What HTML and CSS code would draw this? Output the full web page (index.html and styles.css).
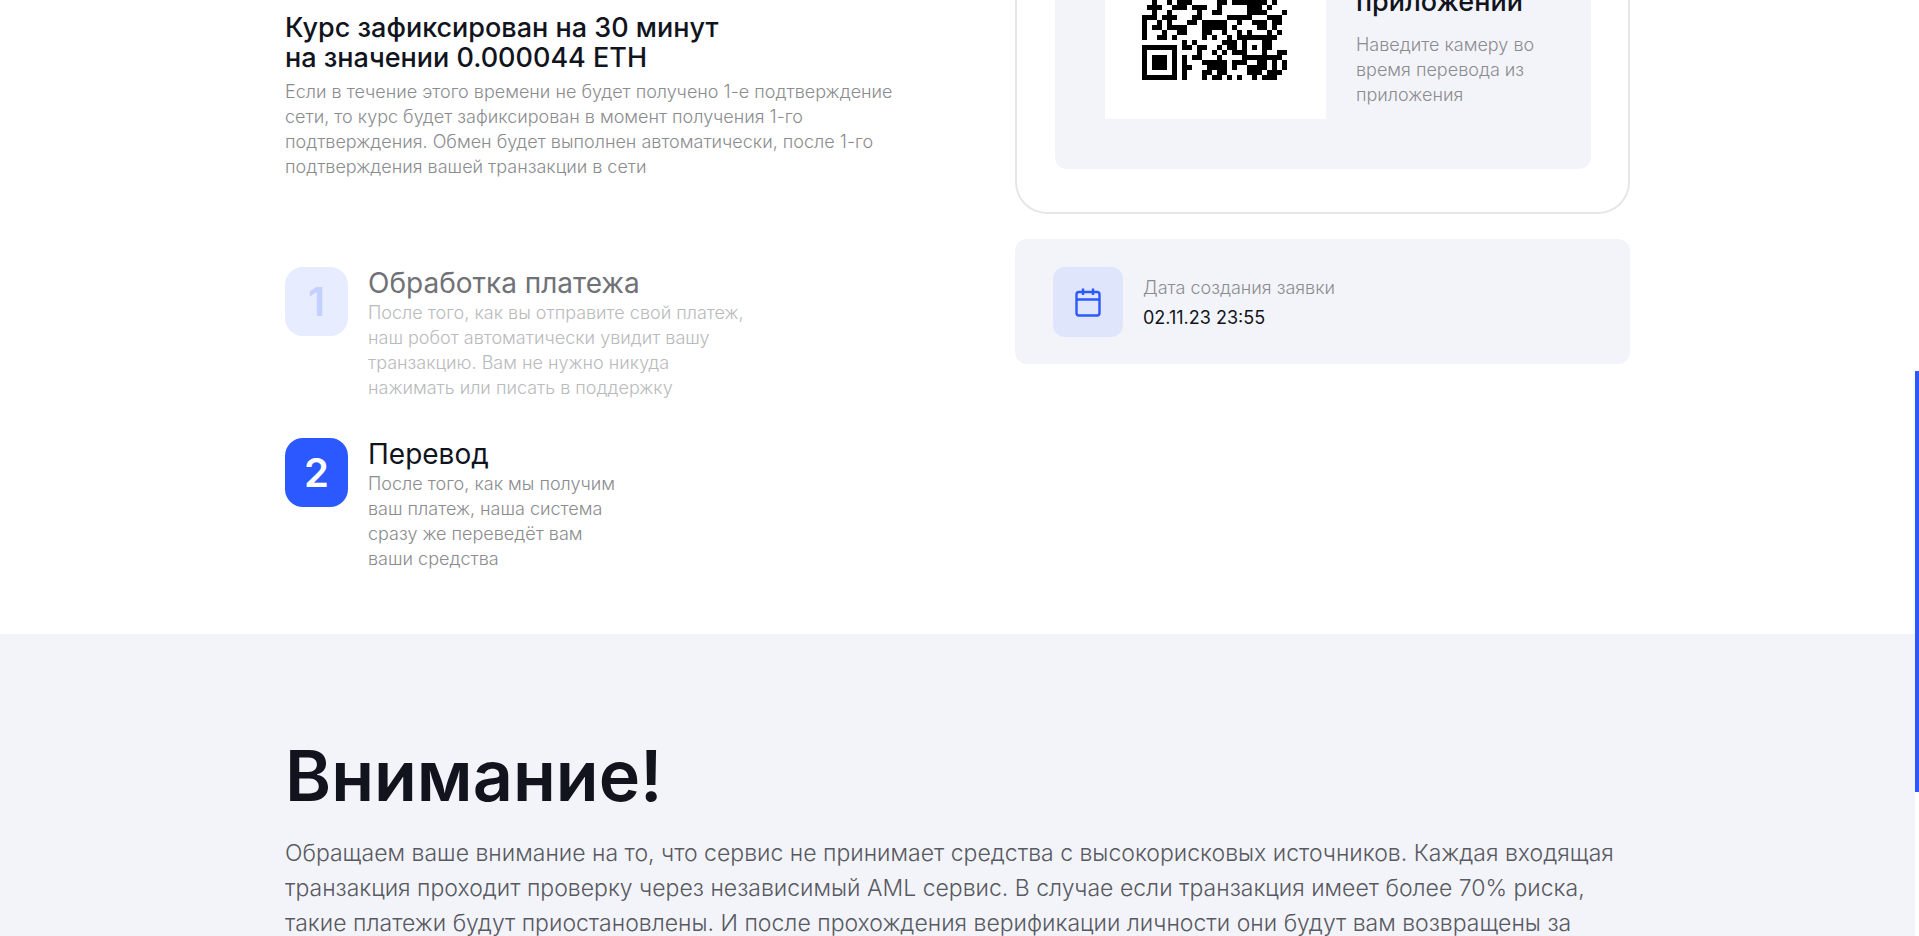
FILE: index.html
```html
<!DOCTYPE html>
<html lang="ru">
<head>
<meta charset="utf-8">
<title>Заявка на обмен</title>
<link rel="stylesheet" href="styles.css">
</head>
<body>
<main class="page">
  <section class="container order">
    <div class="order-info">
      <div class="rate">
        <h2 class="rate-title">Курс зафиксирован на 30 минут<br>на значении 0.000044 ETH</h2>
        <p class="text rate-text">Если в течение этого времени не будет получено 1-е подтверждение<br>сети, то курс будет зафиксирован в момент получения 1-го<br>подтверждения. Обмен будет выполнен автоматически, после 1-го<br>подтверждения вашей транзакции в сети</p>
      </div>
      <ol class="steps">
        <li class="step step-done">
          <span class="step-number">1</span>
          <div>
            <h3 class="step-title">Обработка платежа</h3>
            <p class="text">После того, как вы отправите свой платеж,<br>наш робот автоматически увидит вашу<br>транзакцию. Вам не нужно никуда<br>нажимать или писать в поддержку</p>
          </div>
        </li>
        <li class="step">
          <span class="step-number">2</span>
          <div>
            <h3 class="step-title">Перевод</h3>
            <p class="text">После того, как мы получим<br>ваш платеж, наша система<br>сразу же переведёт вам<br>ваши средства</p>
          </div>
        </li>
      </ol>
    </div>

    <div class="order-side">
      <div class="pay-card">
        <div class="qr-panel">
          <div class="qr-box">
            <svg class="qr" viewBox="0 0 29 16" role="img" aria-label="QR-код" shape-rendering="crispEdges">
              <path stroke="#000" stroke-width="1" fill="none" d="
M2 .5h1m2 0h1m1 0h3m5 0h2m1 0h7m1 0h1
M1 1.5h3m2 0h3m1 0h3m2 0h1m5 0h3m1 0h1
M2 2.5h1m2 0h1m5 0h1m2 0h2m5 0h4m3 0h1
M0 3.5h3m1 0h3m3 0h2m5 0h5m3 0h3
M0 4.5h1m2 0h1m1 0h1m3 0h2m1 0h5m2 0h1m2 0h3m1 0h2
M0 5.5h1m1 0h2m1 0h4m3 0h5m1 0h1m4 0h2m1 0h1
M0 6.5h1m3 0h1m2 0h2m3 0h2m2 0h1m2 0h1m1 0h1m3 0h1m1 0h1
M0 7.5h1m2 0h2m1 0h1m5 0h1m1 0h1m2 0h1m1 0h1m0 0h7
M8 8.5h1m1 0h1m5 0h3m1 0h1m3 0h2
M0 9.5h7m1 0h2m1 0h2m2 0h1m1 0h2m1 0h1m1 0h1m1 0h2
M0 10.5h1m5 0h1m4 0h1m2 0h1m1 0h1m1 0h3m3 0h1m2 0h2
M0 11.5h1m1 0h3m1 0h1m1 0h1m1 0h2m3 0h1m4 0h8
M0 12.5h1m1 0h3m1 0h1m1 0h1m3 0h5m1 0h3m2 0h2m1 0h1m1 0h1
M0 13.5h1m1 0h3m1 0h1m1 0h2m3 0h4m1 0h1m2 0h4m1 0h1m1 0h1
M0 14.5h1m5 0h1m1 0h1m3 0h2m1 0h2m4 0h3m1 0h3
M0 15.5h7m1 0h1m3 0h1m1 0h2m1 0h1m1 0h1m2 0h1m1 0h3"/>
            </svg>
          </div>
          <div class="qr-info">
            <h3 class="qr-title">приложении</h3>
            <p class="text">Наведите камеру во<br>время перевода из<br>приложения</p>
          </div>
        </div>
      </div>
      <div class="date-card">
        <span class="date-icon">
          <svg class="calendar" viewBox="0 0 26 29" fill="none" stroke="#2b59ff" stroke-width="2.4" aria-hidden="true">
            <rect x="1.5" y="4" width="23" height="23.5" rx="2.5"/>
            <path d="M1.5 11.5h23M8 .5v6.500M18 .5v6.500"/>
          </svg>
        </span>
        <dl class="date-info">
          <dt class="text">Дата создания заявки</dt>
          <dd class="date-value">02.11.23 23:55</dd>
        </dl>
      </div>
    </div>
  </section>

  <section class="attention">
    <div class="container">
      <h1 class="attention-title">Внимание!</h1>
      <p class="attention-text">Обращаем ваше внимание на то, что сервис не принимает средства с высокорисковых источников. Каждая входящая<br>транзакция проходит проверку через независимый AML сервис. В случае если транзакция имеет более 70% риска,<br>такие платежи будут приостановлены. И после прохождения верификации личности они будут вам возвращены за</p>
    </div>
  </section>
</main>
<div class="scroll-track" aria-hidden="true"><div class="scroll-thumb"></div></div>
</body>
</html>
```

FILE: styles.css
```css
* {
  box-sizing: border-box;
}

body,
h1,
h2,
h3,
p,
ol,
dl,
dd {
  margin: 0;
  padding: 0;
}

body {
  height: 100vh;
  overflow: hidden;
  background: #fff;
  color: #11141d;
  font-family: Inter, "Liberation Sans", sans-serif;
}

.page {
  display: flex;
  flex-direction: column;
  min-height: 100vh;
  margin-right: 4px;
}

.container {
  width: 100%;
  max-width: 1345px;
  margin: 0 auto;
}

.text {
  font-size: 18px;
  font-weight: 300;
  line-height: 25px;
  color: #8b8c8f;
}

.order {
  display: grid;
  grid-template-columns: minmax(0, 1fr) 615px;
  gap: 40px;
  padding-bottom: 63px;
}

.order-info {
  padding-top: 13px;
}

.rate-title {
  font-size: 27px;
  font-weight: 500;
  line-height: 30px;
}

.rate-text {
  margin-top: 6px;
}

.steps {
  display: flex;
  flex-direction: column;
  gap: 38px;
  margin-top: 88px;
  list-style: none;
}

.step {
  display: flex;
  align-items: flex-start;
  gap: 20px;
}

.step-number {
  display: flex;
  align-items: center;
  justify-content: center;
  width: 63px;
  height: 69px;
  border-radius: 18px;
  background: #2b59ff;
  color: #fff;
  font-size: 40px;
  font-weight: 600;
}

.step-title {
  font-size: 28px;
  font-weight: 400;
  line-height: 33px;
}

.step-done .step-number {
  background: #e7ecff;
  color: #c4d0ff;
}

.step-done .step-title {
  color: #707277;
}

.step-done .text {
  color: #b9babc;
}

.pay-card {
  padding: 0 37px 43px 38px;
  border: 2px solid #e6e6e8;
  border-top: 0;
  border-radius: 0 0 32px 32px;
}

.qr-panel {
  display: flex;
  gap: 30px;
  padding: 0 50px 50px;
  border-radius: 0 0 12px 12px;
  background: #f3f4fa;
}

.qr-box {
  padding: 0 39px 39px 37px;
  background: #fff;
}

.qr {
  display: block;
  width: 145px;
  height: 80px;
}

.qr-title {
  margin-top: -13px;
  font-size: 27px;
  font-weight: 500;
  line-height: 30px;
}

.qr-info .text {
  margin-top: 15px;
}

.date-card {
  display: flex;
  align-items: center;
  gap: 20px;
  margin-top: 25px;
  padding: 28px 38px 27px;
  border-radius: 12px;
  background: #f3f4fa;
}

.date-icon {
  display: flex;
  align-items: center;
  justify-content: center;
  width: 70px;
  height: 70px;
  border-radius: 12px;
  background: #dfe5fb;
}

.calendar {
  width: 26px;
  height: 29px;
}

.date-info {
  display: flex;
  flex-direction: column;
  gap: 5px;
}

.date-value {
  font-size: 18px;
  line-height: 25px;
}

.attention {
  flex: 1;
  padding-top: 97px;
  background: #f3f4fa;
}

.attention-title {
  font-size: 70px;
  font-weight: 600;
  line-height: 90px;
}

.attention-text {
  margin-top: 15px;
  font-size: 23px;
  font-weight: 300;
  line-height: 35px;
  color: #585a61;
  white-space: nowrap;
}

.scroll-track {
  position: fixed;
  top: 0;
  right: 0;
  width: 4px;
  height: 100%;
  padding-top: 371px;
  background: #fff;
}

.scroll-thumb {
  height: 421px;
  background: #2b59ff;
}
```
